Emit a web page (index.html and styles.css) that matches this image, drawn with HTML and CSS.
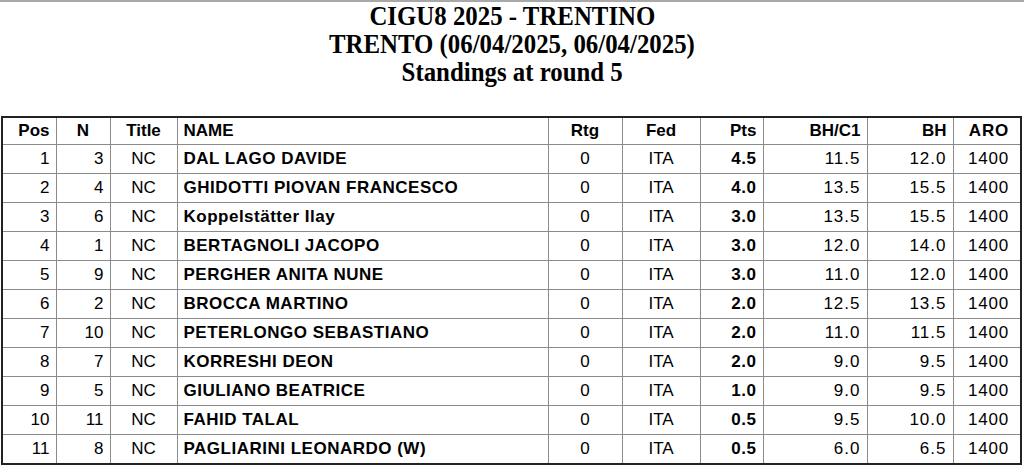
FILE: index.html
```html
<!DOCTYPE html>
<html>
<head>
<meta charset="utf-8">
<link rel="stylesheet" href="styles.css">
</head>
<body>
<div class="topbar"></div>
<header class="heading">
  <div class="line">CIGU8 2025 - TRENTINO</div>
  <div class="line">TRENTO (06/04/2025, 06/04/2025)</div>
  <div class="line">Standings at round 5</div>
</header>
<table class="standings">
  <colgroup>
    <col class="c-pos"><col class="c-n"><col class="c-title"><col class="c-name"><col class="c-rtg"><col class="c-fed"><col class="c-pts"><col class="c-bhc1"><col class="c-bh"><col class="c-aro">
  </colgroup>
  <thead>
    <tr><th class="r">Pos</th><th class="ctr">N</th><th class="ctr">Title</th><th class="l">NAME</th><th class="ctr">Rtg</th><th class="ctr">Fed</th><th class="r">Pts</th><th class="r">BH/C1</th><th class="r">BH</th><th class="r aro">ARO</th></tr>
  </thead>
  <tbody>
    <tr><td class="r">1</td><td class="r">3</td><td class="ctr">NC</td><td class="name">DAL LAGO DAVIDE</td><td class="ctr">0</td><td class="ctr">ITA</td><td class="pts">4.5</td><td class="r sp">11.5</td><td class="r sp">12.0</td><td class="r aro">1400</td></tr>
    <tr><td class="r">2</td><td class="r">4</td><td class="ctr">NC</td><td class="name">GHIDOTTI PIOVAN FRANCESCO</td><td class="ctr">0</td><td class="ctr">ITA</td><td class="pts">4.0</td><td class="r sp">13.5</td><td class="r sp">15.5</td><td class="r aro">1400</td></tr>
    <tr><td class="r">3</td><td class="r">6</td><td class="ctr">NC</td><td class="name">Koppelstätter Ilay</td><td class="ctr">0</td><td class="ctr">ITA</td><td class="pts">3.0</td><td class="r sp">13.5</td><td class="r sp">15.5</td><td class="r aro">1400</td></tr>
    <tr><td class="r">4</td><td class="r">1</td><td class="ctr">NC</td><td class="name">BERTAGNOLI JACOPO</td><td class="ctr">0</td><td class="ctr">ITA</td><td class="pts">3.0</td><td class="r sp">12.0</td><td class="r sp">14.0</td><td class="r aro">1400</td></tr>
    <tr><td class="r">5</td><td class="r">9</td><td class="ctr">NC</td><td class="name">PERGHER ANITA NUNE</td><td class="ctr">0</td><td class="ctr">ITA</td><td class="pts">3.0</td><td class="r sp">11.0</td><td class="r sp">12.0</td><td class="r aro">1400</td></tr>
    <tr><td class="r">6</td><td class="r">2</td><td class="ctr">NC</td><td class="name">BROCCA MARTINO</td><td class="ctr">0</td><td class="ctr">ITA</td><td class="pts">2.0</td><td class="r sp">12.5</td><td class="r sp">13.5</td><td class="r aro">1400</td></tr>
    <tr><td class="r">7</td><td class="r">10</td><td class="ctr">NC</td><td class="name">PETERLONGO SEBASTIANO</td><td class="ctr">0</td><td class="ctr">ITA</td><td class="pts">2.0</td><td class="r sp">11.0</td><td class="r sp">11.5</td><td class="r aro">1400</td></tr>
    <tr><td class="r">8</td><td class="r">7</td><td class="ctr">NC</td><td class="name">KORRESHI DEON</td><td class="ctr">0</td><td class="ctr">ITA</td><td class="pts">2.0</td><td class="r sp">9.0</td><td class="r sp">9.5</td><td class="r aro">1400</td></tr>
    <tr><td class="r">9</td><td class="r">5</td><td class="ctr">NC</td><td class="name">GIULIANO BEATRICE</td><td class="ctr">0</td><td class="ctr">ITA</td><td class="pts">1.0</td><td class="r sp">9.0</td><td class="r sp">9.5</td><td class="r aro">1400</td></tr>
    <tr><td class="r">10</td><td class="r">11</td><td class="ctr">NC</td><td class="name">FAHID TALAL</td><td class="ctr">0</td><td class="ctr">ITA</td><td class="pts">0.5</td><td class="r sp">9.5</td><td class="r sp">10.0</td><td class="r aro">1400</td></tr>
    <tr><td class="r">11</td><td class="r">8</td><td class="ctr">NC</td><td class="name">PAGLIARINI LEONARDO (W)</td><td class="ctr">0</td><td class="ctr">ITA</td><td class="pts">0.5</td><td class="r sp">6.0</td><td class="r sp">6.5</td><td class="r aro">1400</td></tr>
  </tbody>
</table>
</body>
</html>
```

FILE: styles.css
```css
html, body {
  margin: 0;
  padding: 0;
  background: #ffffff;
}
body {
  font-family: "Liberation Sans", Arial, sans-serif;
  color: #000;
}
.topbar {
  height: 2px;
  background: #a8a8a8;
}
.heading {
  display: flex;
  flex-direction: column;
  align-items: center;
  padding-top: 0;
  height: 114px;
  box-sizing: border-box;
}
.heading .line {
  font-family: "Liberation Serif", "Times New Roman", serif;
  font-weight: bold;
  font-size: 27px;
  line-height: 28px;
  transform: scaleX(0.92);
}
.standings {
  margin-left: 1px;
  width: 1021px;
  border-collapse: collapse;
  table-layout: fixed;
  border: 2px solid #222;
  font-size: 17px;
}
.c-pos { width: 54px; }
.c-n { width: 54px; }
.c-title { width: 67px; }
.c-name { width: 371px; }
.c-rtg { width: 74px; }
.c-fed { width: 78px; }
.c-pts { width: 63px; }
.c-bhc1 { width: 104px; }
.c-bh { width: 86px; }
.c-aro { width: 68px; }
.standings th, .standings td {
  border: 1px solid #8a8a8a;
  padding: 0 6px;
  white-space: nowrap;
  overflow: hidden;
}
.standings th {
  height: 26px;
  font-weight: bold;
}
.standings td {
  height: 28px;
}
.r { text-align: right; }
.l { text-align: left; }
.ctr { text-align: center; }
.name {
  text-align: left;
  font-weight: bold;
  letter-spacing: 0.5px;
}
.pts {
  text-align: right;
  font-weight: bold;
  letter-spacing: 0.5px;
}
.sp { letter-spacing: 1px; }
.standings .aro {
  padding-right: 11px;
  letter-spacing: 0.8px;
}
```
